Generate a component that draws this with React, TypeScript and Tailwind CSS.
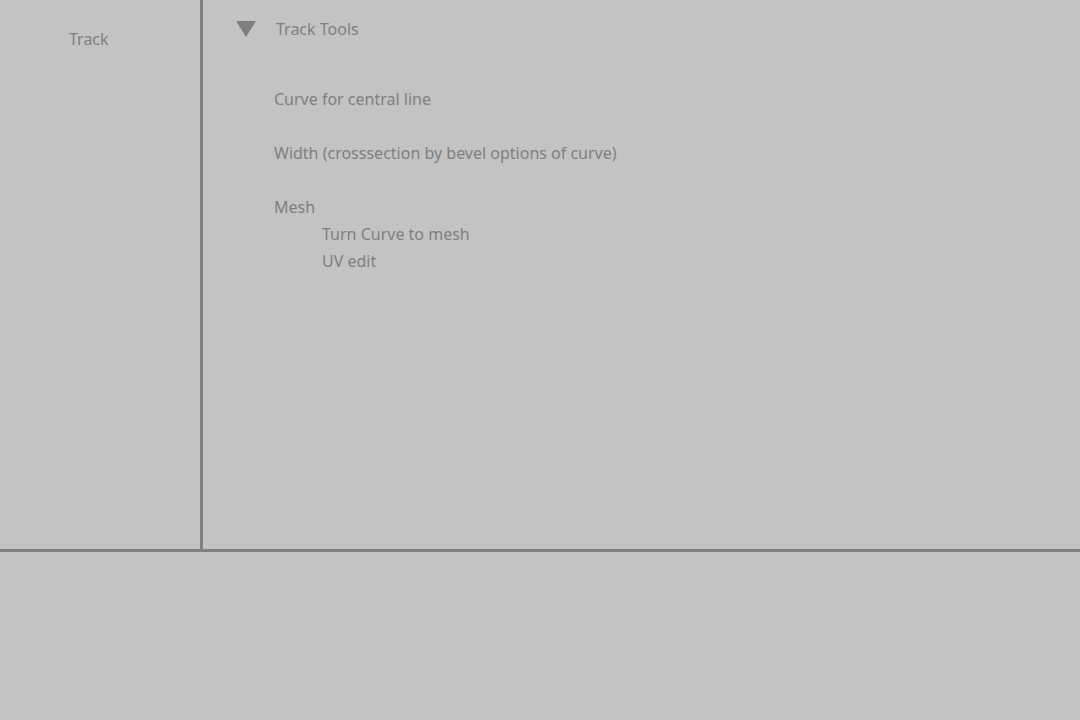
export default function App() {
  return (
    <div className="w-[1080px] h-[720px] bg-[#c3c3c3] flex flex-col text-[#808080] font-['Noto_Sans',sans-serif] text-[16px] overflow-hidden">
      {/* Top area */}
      <div className="flex h-[552px] border-b-[3px] border-[#808080]">
        {/* Left pane */}
        <div className="w-[203px] border-r-[3px] border-[#808080] pt-[27px] pl-[69px] leading-[24px]">
          Track
        </div>

        {/* Right pane */}
        <div className="flex-1 pt-[17px] leading-[24px]">
          <div className="flex items-center">
            <svg width="20" height="16" viewBox="0 0 20 16" className="ml-[33px]">
              <polygon points="0,0 20,0 10,16" fill="#7f7f7f" />
            </svg>
            <span className="ml-[20px]">Track Tools</span>
          </div>
          <div className="pl-[71px] mt-[46px] flex flex-col">
            <div>Curve for central line</div>
            <div className="mt-[30px]">Width (crosssection by bevel options of curve)</div>
            <div className="mt-[30px]">Mesh</div>
            <div className="pl-[48px] mt-[3px]">Turn Curve to mesh</div>
            <div className="pl-[48px] mt-[3px]">UV edit</div>
          </div>
        </div>
      </div>

      {/* Bottom area */}
      <div className="flex-1" />
    </div>
  );
}
